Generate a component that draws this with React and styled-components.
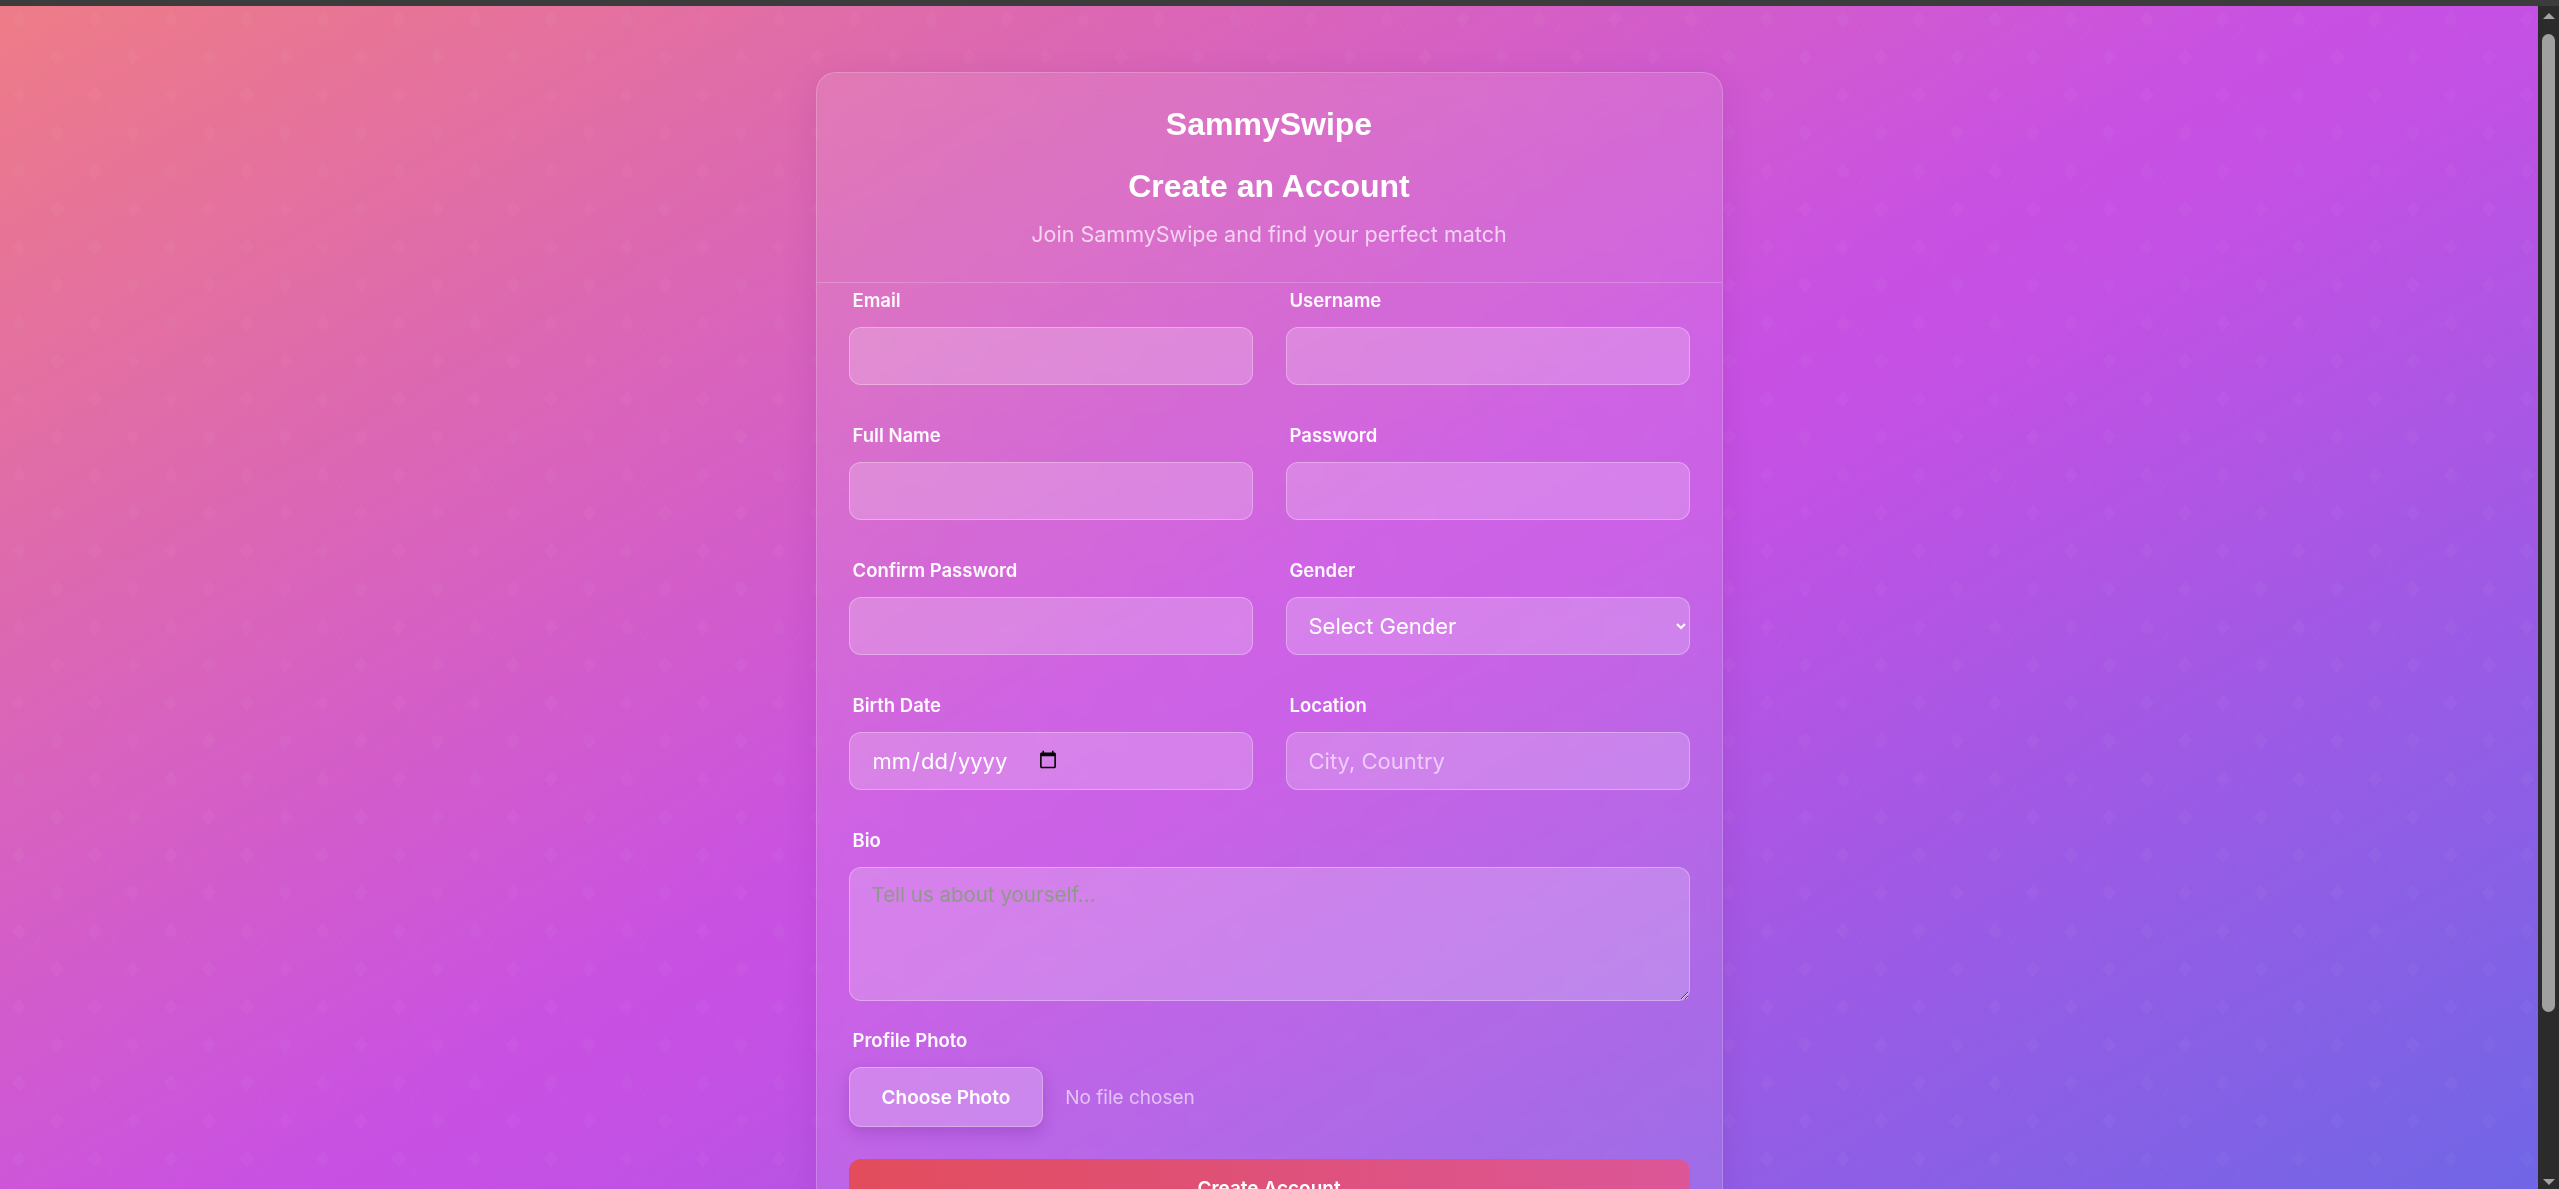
import styled, { createGlobalStyle } from "styled-components";

const GlobalStyle = createGlobalStyle`
  body {
    margin: 0;
    min-height: 100vh;
    font-family: Inter, "Noto Sans", sans-serif;
    color: #fff;
    background: linear-gradient(
      150deg,
      #ee7c86 0%,
      #c951e2 50%,
      #c450e4 56%,
      #6f66e6 100%
    ) fixed;
  }
  * {
    box-sizing: border-box;
  }
`;

const TopStrip = styled.div`
  position: fixed;
  top: 0;
  left: 0;
  right: 0;
  height: 6px;
  background: #3c3c3c;
  z-index: 5;
`;

// fake classic scrollbar, the capture hides the native one
const ScrollTrack = styled.div`
  position: fixed;
  top: 6px;
  right: 0;
  bottom: 0;
  width: 21px;
  background: #2b2b2b;
  z-index: 5;
  display: flex;
  flex-direction: column;
  align-items: center;
  padding: 7px 0 4px;
`;

const Arrow = styled.span`
  width: 0;
  height: 0;
  border-left: 6px solid transparent;
  border-right: 6px solid transparent;
  ${(p) =>
    p.$down
      ? "border-top: 6px solid #a3a3a3; margin-top: auto;"
      : "border-bottom: 6px solid #a3a3a3;"}
`;

const Thumb = styled.span`
  margin-top: 15px;
  width: 13px;
  height: 978px;
  border-radius: 7px;
  background: #a0a0a0;
`;

const Pattern = styled.svg`
  position: fixed;
  inset: 0;
  width: 100%;
  height: 100%;
  z-index: 0;
  pointer-events: none;
`;

const Page = styled.main`
  position: relative;
  z-index: 1;
  display: flex;
  justify-content: center;
  padding: 72px 21px 80px 0;
`;

const Card = styled.section`
  width: 907px;
  border: 1px solid rgba(255, 255, 255, 0.2);
  border-radius: 20px;
  background: rgba(255, 255, 255, 0.1);
  backdrop-filter: blur(10px);
  box-shadow: 0 8px 32px rgba(90, 20, 110, 0.12);
`;

const Header = styled.header`
  padding: 33px 32px 34px;
  text-align: center;
  border-bottom: 1px solid rgba(255, 255, 255, 0.2);
`;

const Logo = styled.h1`
  margin: 0;
  font: 700 32px/37px "Liberation Sans", Arial, sans-serif;
  color: #fff;
`;

const Title = styled.h2`
  margin: 25px 0 0;
  font: 700 32px/37px "Liberation Sans", Arial, sans-serif;
  color: #fff;
`;

const Subtitle = styled.p`
  margin: 16px 0 0;
  font-size: 21.5px;
  line-height: 27px;
  color: rgba(255, 255, 255, 0.7);
`;

const Form = styled.form`
  display: flex;
  flex-direction: column;
  padding: 4px 32px 40px;
`;

const FieldGrid = styled.div`
  display: grid;
  grid-template-columns: 1fr 1fr;
  column-gap: 33px;
  row-gap: 37px;
`;

const Field = styled.div`
  display: flex;
  flex-direction: column;
  grid-column: ${(p) => (p.$wide ? "1 / -1" : "auto")};
  margin-top: ${(p) => p.$offset || 0}px;
`;

const Label = styled.label`
  margin: 0 0 14px 4px;
  font-size: 18.5px;
  font-weight: 600;
  line-height: 26px;
  color: rgba(255, 255, 255, 0.96);
`;

const controlStyle = `
  width: 100%;
  font-family: Inter, "Noto Sans", sans-serif;
  color: #fff;
  background: rgba(255, 255, 255, 0.2);
  border: 1px solid rgba(255, 255, 255, 0.3);
  border-radius: 12px;
  outline: none;
  color-scheme: light;
`;

const Input = styled.input`
  ${controlStyle};
  height: 58px;
  padding: 0 22px;
  font-size: 22px;

  &::placeholder {
    color: rgba(255, 255, 255, 0.6);
  }

  &::-webkit-datetime-edit {
    flex: 0 0 auto;
  }

  &::-webkit-calendar-picker-indicator {
    margin-left: 0;
    padding: 0;
    width: 20px;
    height: 22px;
  }
`;

const Select = styled.select`
  ${controlStyle};
  height: 58px;
  padding: 0 26px 0 18px;
  font-size: 22px;

  option {
    color: #222;
  }
`;

const TextArea = styled.textarea`
  ${controlStyle};
  height: 134px;
  padding: 14px 22px;
  font-size: 20.5px;
  resize: vertical;

  &::placeholder {
    color: #8e9a88;
  }
`;

const PhotoRow = styled.div`
  display: flex;
  align-items: center;
  gap: 22px;
`;

const ChooseButton = styled.label`
  display: inline-flex;
  align-items: center;
  height: 60px;
  padding: 0 32px;
  font-size: 19px;
  font-weight: 600;
  color: #fff;
  background: rgba(255, 255, 255, 0.22);
  border: 1px solid rgba(255, 255, 255, 0.3);
  border-radius: 12px;
  box-shadow: 0 6px 16px rgba(80, 20, 120, 0.22);
  cursor: pointer;
`;

const HiddenFile = styled.input`
  display: none;
`;

const FileName = styled.span`
  font-size: 19px;
  color: rgba(255, 255, 255, 0.6);
`;

const SubmitButton = styled.button`
  margin-top: 32px;
  height: 58px;
  width: 100%;
  border: none;
  border-radius: 12px;
  font-family: Inter, "Noto Sans", sans-serif;
  font-size: 19px;
  font-weight: 600;
  color: #fff;
  background: linear-gradient(90deg, #e24c5c 0%, #dc5698 100%);
  cursor: pointer;
`;

const Footer = styled.p`
  margin: 28px 0 0;
  text-align: center;
  font-size: 18px;
  line-height: 27px;
  color: rgba(255, 255, 255, 0.8);

  a {
    color: #fff;
    font-weight: 600;
    text-decoration: none;
  }
`;

function Diamonds() {
  return (
    <Pattern aria-hidden="true">
      <defs>
        <pattern id="dia" width="76" height="76" patternUnits="userSpaceOnUse">
          <path d="M19 11 L26 19 L19 27 L12 19 Z" fill="rgba(255,255,255,0.03)" />
          <path d="M57 49 L64 57 L57 65 L50 57 Z" fill="rgba(255,255,255,0.03)" />
          <path d="M30 40 L40 24" stroke="rgba(255,255,255,0.03)" strokeWidth="1" />
        </pattern>
      </defs>
      <rect width="100%" height="100%" fill="url(#dia)" />
    </Pattern>
  );
}

const fields = [
  { id: "email", label: "Email", type: "email" },
  { id: "username", label: "Username", type: "text" },
  { id: "fullName", label: "Full Name", type: "text" },
  { id: "password", label: "Password", type: "password" },
  { id: "confirm", label: "Confirm Password", type: "password" },
];

function App() {
  return (
    <>
      <GlobalStyle />
      <TopStrip />
      <ScrollTrack aria-hidden="true">
        <Arrow />
        <Thumb />
        <Arrow $down />
      </ScrollTrack>
      <Diamonds />
      <Page>
        <Card>
          <Header>
            <Logo>SammySwipe</Logo>
            <Title>Create an Account</Title>
            <Subtitle>Join SammySwipe and find your perfect match</Subtitle>
          </Header>
          <Form onSubmit={(e) => e.preventDefault()}>
            <FieldGrid>
              {fields.map((f) => (
                <Field key={f.id}>
                  <Label htmlFor={f.id}>{f.label}</Label>
                  <Input id={f.id} type={f.type} />
                </Field>
              ))}
              <Field>
                <Label htmlFor="gender">Gender</Label>
                <Select id="gender" defaultValue="">
                  <option value="">Select Gender</option>
                  <option value="male">Male</option>
                  <option value="female">Female</option>
                  <option value="other">Other</option>
                </Select>
              </Field>
              <Field>
                <Label htmlFor="birth">Birth Date</Label>
                <Input id="birth" type="date" />
              </Field>
              <Field>
                <Label htmlFor="location">Location</Label>
                <Input id="location" type="text" placeholder="City, Country" />
              </Field>
              <Field $wide>
                <Label htmlFor="bio">Bio</Label>
                <TextArea id="bio" placeholder="Tell us about yourself..." />
              </Field>
            </FieldGrid>

            <Field $offset={26}>
              <Label>Profile Photo</Label>
              <PhotoRow>
                <ChooseButton htmlFor="photo">Choose Photo</ChooseButton>
                <HiddenFile id="photo" type="file" accept="image/*" />
                <FileName>No file chosen</FileName>
              </PhotoRow>
            </Field>

            <SubmitButton type="submit">Create Account</SubmitButton>
            <Footer>
              Already have an account? <a href="#login">Log in</a>
            </Footer>
          </Form>
        </Card>
      </Page>
    </>
  );
}

export default App;
